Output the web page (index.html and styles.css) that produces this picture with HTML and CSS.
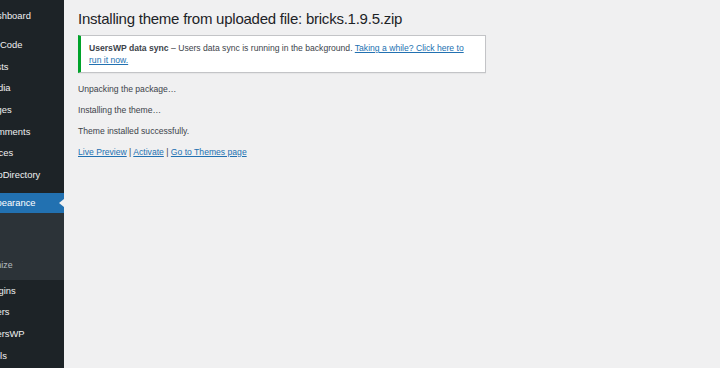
FILE: index.html
```html
<!DOCTYPE html>
<html lang="en">
<head>
  <meta charset="UTF-8" />
  <title>Install Themes</title>
  <link rel="stylesheet" href="styles.css">
</head>
<body>
  <div class="admin">
    <nav class="sidebar">
      <ul class="menu">
        <li class="menu-item">Dashboard</li>
        <li class="separator"></li>
        <li class="menu-item">WPCode</li>
        <li class="menu-item">Posts</li>
        <li class="menu-item">Media</li>
        <li class="menu-item">Pages</li>
        <li class="menu-item">Comments</li>
        <li class="menu-item">Places</li>
        <li class="menu-item">GeoDirectory</li>
        <li class="separator"></li>
        <li class="menu-item current">Appearance</li>
        <li class="submenu">
          <div class="sub-item">Editor</div>
          <div class="sub-item">Menus</div>
          <div class="sub-item">Customize</div>
        </li>
        <li class="menu-item">Plugins</li>
        <li class="menu-item">Users</li>
        <li class="menu-item">UsersWP</li>
        <li class="menu-item">Tools</li>
      </ul>
    </nav>

    <main class="content">
      <h1>Installing theme from uploaded file: bricks.1.9.5.zip</h1>

      <div class="notice">
        <p><strong>UsersWP data sync</strong> – Users data sync is running in the background. <a href="#">Taking a while? Click here to run it now.</a></p>
      </div>

      <p class="step">Unpacking the package…</p>
      <p class="step">Installing the theme…</p>
      <p class="step">Theme installed successfully.</p>
      <p class="step"><a href="#">Live Preview</a> | <a href="#">Activate</a> | <a href="#">Go to Themes page</a></p>
    </main>
  </div>
</body>
</html>
```

FILE: styles.css
```css
:root {
  --sidebar: #1d2327;
  --submenu: #2c3338;
  --accent: #2271b1;
  --bg: #f0f0f1;
  --text: #3c434a;
  --green: #00a32a;
}

body {
  margin: 0;
  background: var(--bg);
  font-family: "Liberation Sans", Arial, sans-serif;
  color: var(--text);
  height: 368px;
  overflow: hidden;
}

.admin {
  display: flex;
  height: 368px;
}

.sidebar {
  width: 64px;
  flex: none;
  background: var(--sidebar);
  overflow: hidden;
}

.menu {
  list-style: none;
  margin: 5.2px 0 0 -40px;
  padding: 0;
  width: 104px;
}

.menu-item {
  position: relative;
  height: 21.7px;
  line-height: 21.7px;
  padding-left: 25px;
  font-size: 9.4px;
  color: #f0f0f1;
  white-space: nowrap;
}

.menu-item.current {
  background: var(--accent);
  color: #fff;
  height: 20px;
  line-height: 20px;
}

.menu-item.current::after {
  content: '';
  position: absolute;
  right: 0;
  top: 50%;
  margin-top: -4px;
  border-top: 4px solid transparent;
  border-bottom: 4px solid transparent;
  border-right: 5px solid var(--bg);
}

.separator {
  height: 7px;
}

.submenu {
  background: var(--submenu);
  padding: 7px 0 6px;
}

.sub-item {
  height: 18px;
  line-height: 18px;
  padding-left: 11px;
  font-size: 8.8px;
  color: rgba(240, 246, 252, 0.7);
  white-space: nowrap;
}

.content {
  flex: 1;
  padding: 0 14px;
}

h1 {
  font-size: 15px;
  font-weight: 400;
  letter-spacing: -0.24px;
  color: #1d2327;
  margin: 10px 0 7px;
  line-height: 18px;
}

.notice {
  width: 388px;
  background: #fff;
  border: 1px solid #c3c4c7;
  border-left: 3px solid var(--green);
  box-shadow: 0 1px 1px rgba(0, 0, 0, 0.04);
  padding: 6px 8px;
}

.notice p {
  margin: 0;
  font-size: 8.6px;
  line-height: 12px;
}

a {
  color: var(--accent);
}

.step {
  font-size: 8.6px;
  line-height: 12px;
  margin: 9px 0 0;
}

.notice + .step {
  margin-top: 10px;
}
```
